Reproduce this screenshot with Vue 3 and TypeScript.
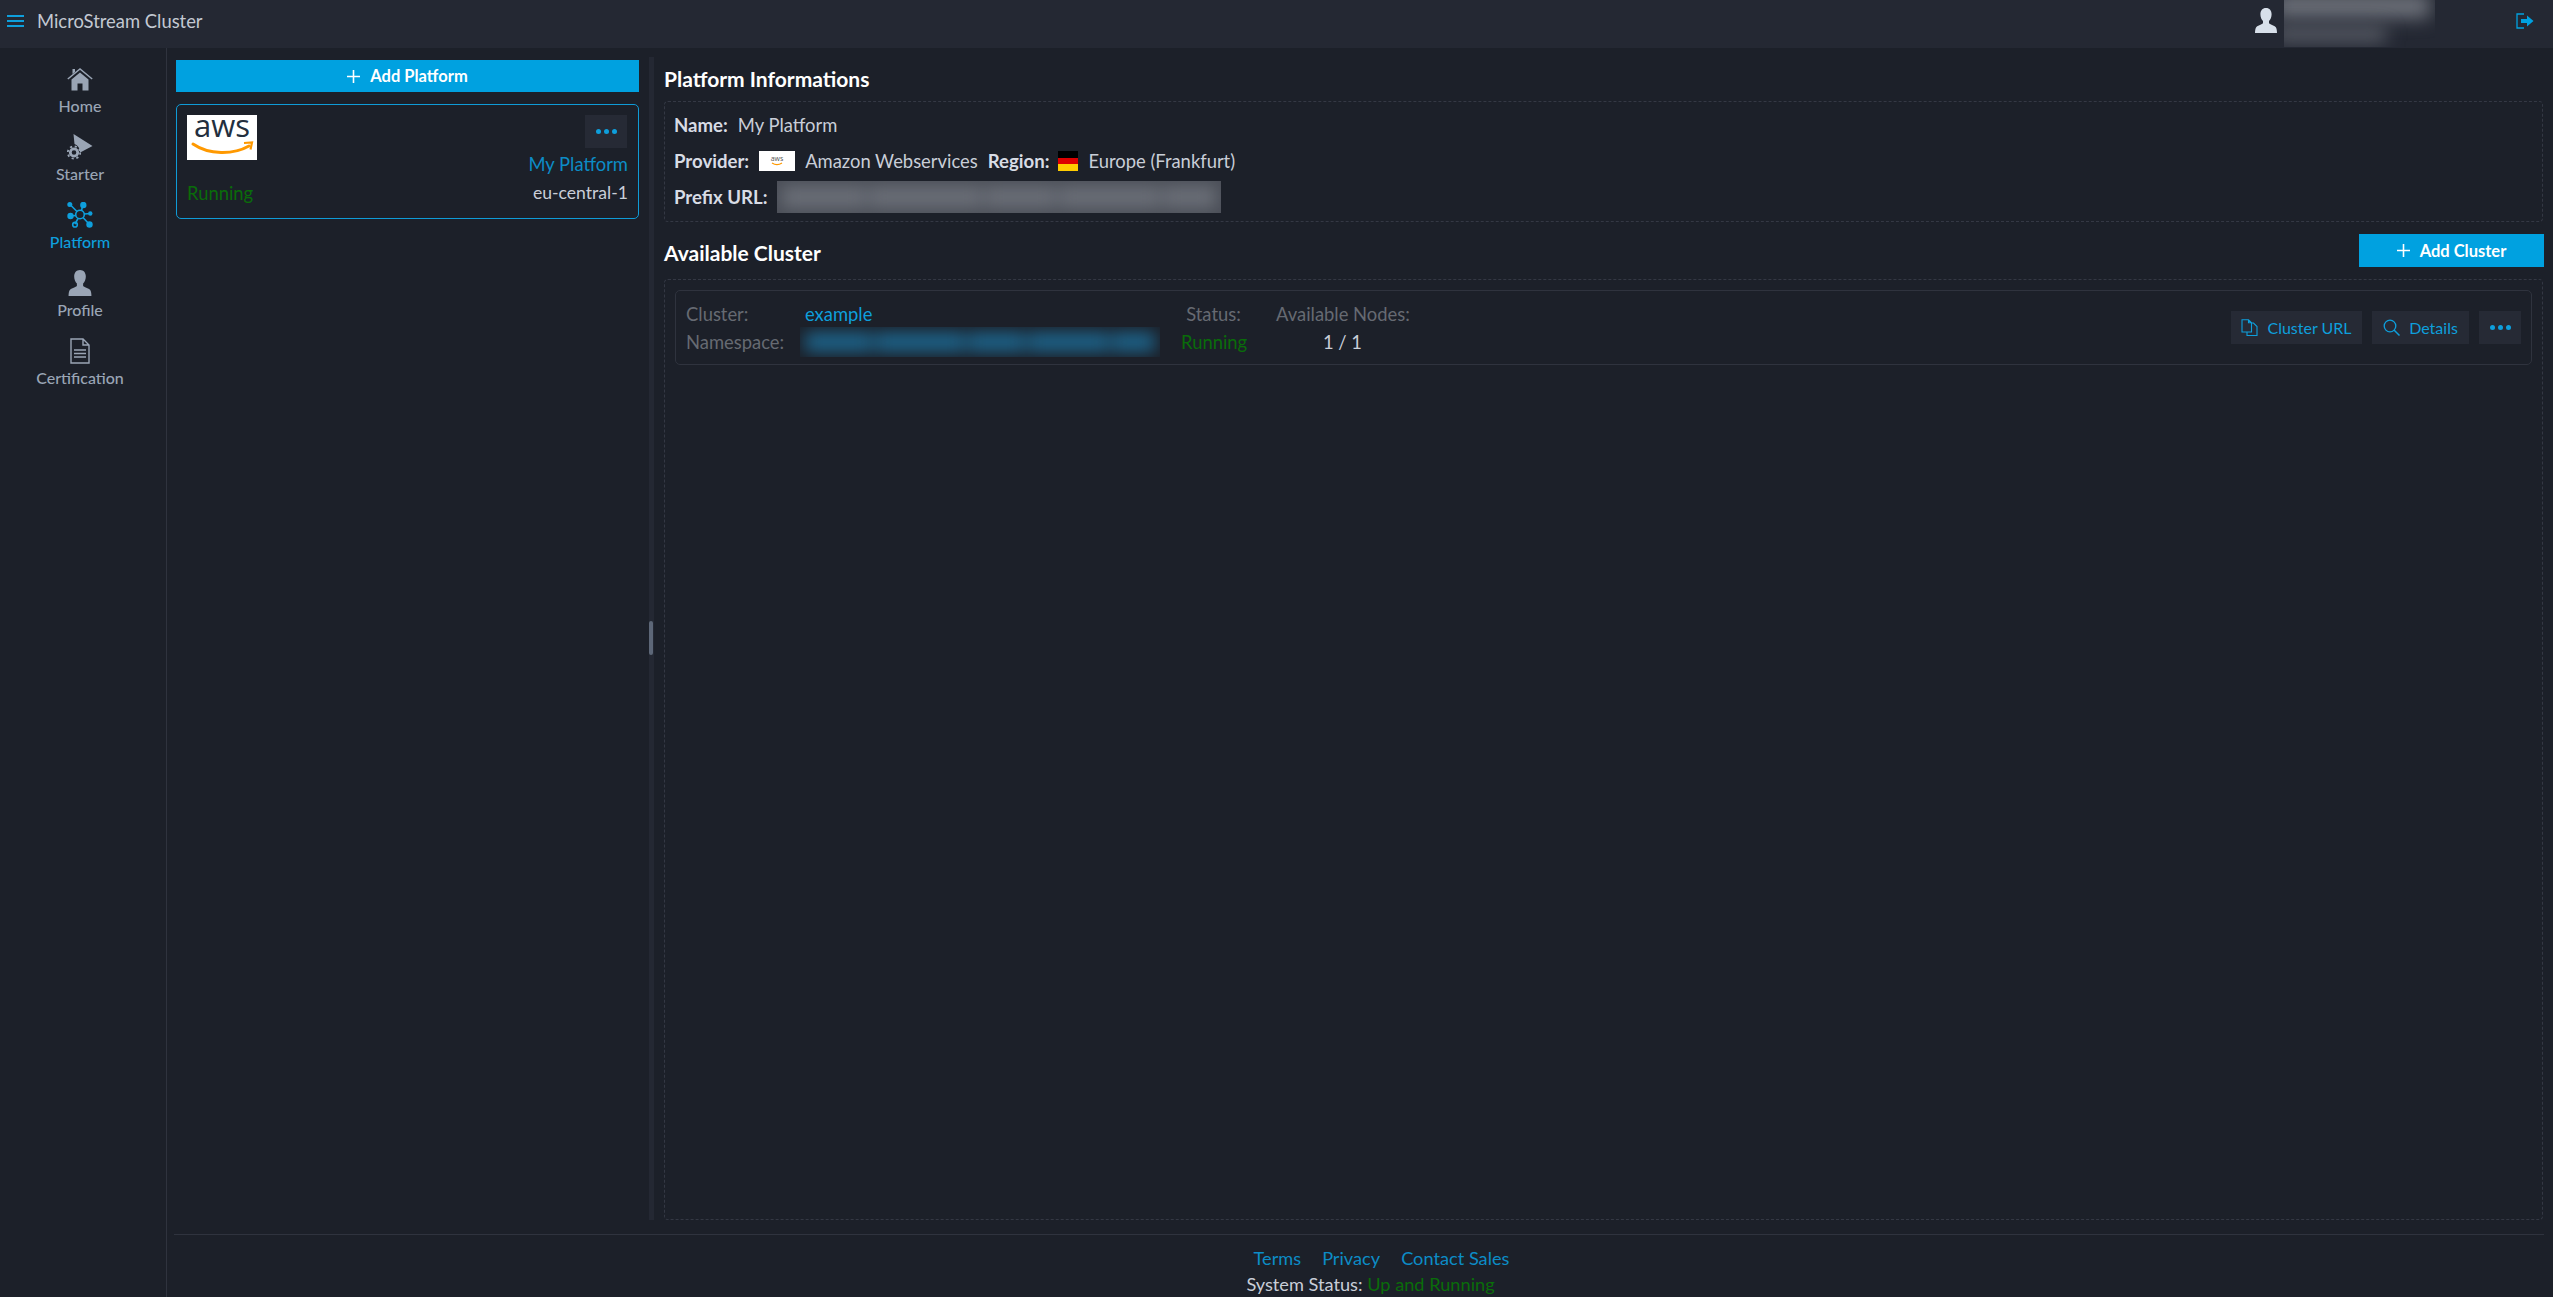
<script setup lang="ts">
const blurBars: number[] = [70, 95, 60, 85, 45];
</script>

<template>
  <div class="app">
    <header class="topbar">
      <button class="burger" aria-label="Menu"><span></span><span></span><span></span></button>
      <span class="brand">MicroStream Cluster</span>
      <svg class="user" viewBox="0 0 22 25" aria-hidden="true">
        <path d="M11 0c3.600 0 5.600 2.700 5.600 6.200 0 2.800-1.100 5.300-2.600 6.700v2.200c0 1 4.600 2.300 6.600 3.800 1 .8 1.400 3.500 1.400 6.100H0c0-2.600.4-5.300 1.400-6.100 2-1.500 6.600-2.800 6.600-3.800v-2.200C6.500 11.500 5.400 9 5.400 6.200 5.400 2.700 7.400 0 11 0z" fill="#d8e0ea"/>
      </svg>
      <div class="user-blur" aria-hidden="true">
        <div class="user-blur-line one"></div>
        <div class="user-blur-line two"></div>
      </div>
      <svg class="logout" viewBox="0 0 18 16" aria-hidden="true">
        <path d="M8 1H1v14h7" fill="none" stroke="#00a1e0" stroke-width="1.300"/>
        <path d="M5 6h6V2.500L17.500 8 11 13.500V10H5z" fill="#00a1e0"/>
      </svg>
    </header>

    <div class="body">
      <nav class="nav">
        <a class="nav-item">
          <svg viewBox="0 0 26 23" class="nav-icon" aria-hidden="true">
            <path d="M.8 11.500 13 1.500l12.200 10" fill="none" stroke="#9aa5b5" stroke-width="1.500"/>
            <path d="M5.500 1.500h2.500v3l-2.500 2z" fill="#9aa5b5"/>
            <path d="M13 5l8.500 7v11H15.500v-7h-5v7H4.500V12z" fill="#9aa5b5"/>
          </svg>
          <span>Home</span>
        </a>
        <a class="nav-item">
          <svg viewBox="0 0 26 26" class="nav-icon" aria-hidden="true">
            <path d="M6.500 0l19 12-12.300 6.500C13 14 11 11.500 7.500 10z" fill="#9aa5b5"/>
            <circle cx="7" cy="18.500" r="3.700" fill="none" stroke="#9aa5b5" stroke-width="2.800"/>
            <circle cx="7" cy="18.500" r="6.200" fill="none" stroke="#9aa5b5" stroke-width="1.800" stroke-dasharray="2.200 2.670"/>
          </svg>
          <span>Starter</span>
        </a>
        <a class="nav-item active">
          <svg viewBox="0 0 26 26" class="nav-icon" aria-hidden="true">
            <g stroke="#0e9fdc" stroke-width="1.600" fill="none">
              <circle cx="13" cy="12.500" r="4.300"/>
              <path d="M3 2.500l7 7M16 2.500l-1.500 6M17 12l7-.5M3.500 14l5.500-.5M8 22l3-5.500M22.500 22.500 16 15.500"/>
              <circle cx="8" cy="22.700" r="2.300"/>
            </g>
            <g fill="#0e9fdc">
              <circle cx="2.800" cy="2.500" r="2.500"/>
              <circle cx="16.300" cy="3" r="3.200"/>
              <circle cx="23.300" cy="11.500" r="2.200"/>
              <circle cx="3.500" cy="14" r="3.200"/>
              <circle cx="22.500" cy="22.500" r="3.200"/>
            </g>
          </svg>
          <span>Platform</span>
        </a>
        <a class="nav-item">
          <svg viewBox="0 0 22 25" class="nav-icon" aria-hidden="true">
            <path d="M11 0c3.600 0 5.600 2.700 5.600 6.200 0 2.800-1.100 5.300-2.600 6.700v2.200c0 1 4.600 2.300 6.600 3.800 1 .8 1.400 3.500 1.400 6.100H0c0-2.600.4-5.300 1.400-6.100 2-1.500 6.600-2.800 6.600-3.800v-2.200C6.500 11.500 5.400 9 5.400 6.200 5.400 2.700 7.400 0 11 0z" fill="#9aa5b5"/>
          </svg>
          <span>Profile</span>
        </a>
        <a class="nav-item">
          <svg viewBox="0 0 20 26" class="nav-icon" aria-hidden="true">
            <path d="M1 1h12l6 6v18H1zM13 1v6h6" fill="none" stroke="#9aa5b5" stroke-width="1.400"/>
            <path d="M4 12h12M4 15.500h12M4 19h12" stroke="#9aa5b5" stroke-width="1.400"/>
          </svg>
          <span>Certification</span>
        </a>
      </nav>

      <main class="main">
        <div class="panes">
          <section class="left">
            <button class="primary">
              <svg class="plus" viewBox="0 0 14 14" aria-hidden="true"><path d="M7 0v14M0 7h14" stroke="#fff" stroke-width="1.700"/></svg>
              <span>Add Platform</span>
            </button>
            <article class="platform-card">
              <div class="card-top">
                <div class="aws-logo">
                  <svg viewBox="0 0 70 45" aria-label="aws">
                    <text x="35" y="22" text-anchor="middle" class="aws-text">aws</text>
                    <path d="M6 29c16 11 40 11 56 2" fill="none" stroke="#f90" stroke-width="3" stroke-linecap="round"/>
                    <path d="M57 28l8-.5-1.500 7" fill="none" stroke="#f90" stroke-width="2.200"/>
                  </svg>
                </div>
                <div class="card-actions">
                  <button class="dark-btn dots" aria-label="More"><i></i><i></i><i></i></button>
                  <span class="link platform-name">My Platform</span>
                </div>
              </div>
              <div class="card-bottom">
                <span class="green">Running</span>
                <span class="region">eu-central-1</span>
              </div>
            </article>
          </section>

          <div class="splitter"><div class="handle"></div></div>

          <section class="right">
            <h2 class="heading first">Platform Informations</h2>
            <div class="info-box">
              <div class="info-row"><b>Name:</b><span class="name-val">My Platform</span></div>
              <div class="info-row">
                <b>Provider:</b>
                <span class="mini-logo"><svg viewBox="0 0 36 20" aria-hidden="true"><text x="18" y="10" text-anchor="middle" class="mini-text">aws</text><path d="M13 12c3 2 7 2 10 0" stroke="#f90" fill="none" stroke-width="1.200"/></svg></span>
                <span class="provider-val">Amazon Webservices</span>
                <b class="region-label">Region:</b>
                <span class="flag"><i class="black"></i><i class="red"></i><i class="gold"></i></span>
                <span>Europe (Frankfurt)</span>
              </div>
              <div class="info-row">
                <b>Prefix URL:</b>
                <div class="blur-mask url-blur" aria-hidden="true">
                  <div class="blur-bars grey"><i v-for="(w, i) in blurBars" :key="i" :style="{ flexGrow: w }"></i></div>
                </div>
              </div>
            </div>

            <div class="cluster-head">
              <h2 class="heading second">Available Cluster</h2>
              <button class="primary add-cluster">
                <svg class="plus" viewBox="0 0 14 14" aria-hidden="true"><path d="M7 0v14M0 7h14" stroke="#fff" stroke-width="1.700"/></svg>
                <span>Add Cluster</span>
              </button>
            </div>

            <div class="cluster-box">
              <article class="cluster-card">
                <div class="cluster-grid">
                  <span class="muted">Cluster:</span>
                  <span class="example">example</span>
                  <span class="muted center">Status:</span>
                  <span></span>
                  <span class="muted center">Available Nodes:</span>
                  <span class="muted">Namespace:</span>
                  <div class="blur-mask ns-blur" aria-hidden="true">
                    <div class="blur-bars blue"><i v-for="(w, i) in blurBars" :key="i" :style="{ flexGrow: w }"></i></div>
                  </div>
                  <span class="green center">Running</span>
                  <span></span>
                  <span class="nodes center">1 / 1</span>
                </div>
                <div class="cluster-actions">
                  <button class="dark-btn url-btn">
                    <svg viewBox="0 0 17 17" class="btn-icon" aria-hidden="true">
                      <path d="M1 .8h6.500l3 3V13H1zM7.500.8v3h3" fill="none" stroke="#0e9fdc" stroke-width="1.100"/>
                      <path d="M10.500 4h2l3.500 3.500v9H6V13" fill="none" stroke="#0e9fdc" stroke-width="1.100"/>
                    </svg>
                    <span>Cluster URL</span>
                  </button>
                  <button class="dark-btn details-btn">
                    <svg viewBox="0 0 17 17" class="btn-icon" aria-hidden="true">
                      <circle cx="7" cy="7" r="5.800" fill="none" stroke="#0e9fdc" stroke-width="1.300"/>
                      <path d="M11 11l5.500 5.500" stroke="#0e9fdc" stroke-width="1.500"/>
                    </svg>
                    <span>Details</span>
                  </button>
                  <button class="dark-btn dots" aria-label="More"><i></i><i></i><i></i></button>
                </div>
              </article>
            </div>
          </section>
        </div>

        <footer class="footer">
          <div class="footer-links">
            <a>Terms</a><a>Privacy</a><a>Contact Sales</a>
          </div>
          <div class="status">System Status: <span class="green">Up and Running</span></div>
        </footer>
      </main>
    </div>
  </div>
</template>

<style>
html, body { margin: 0; background: #1c2029; }
</style>

<style scoped>
* { box-sizing: border-box; }
.app {
  height: 1297px;
  display: flex;
  flex-direction: column;
  background: #1c2029;
  color: #c9ced8;
  font-family: Lato, "Open Sans", sans-serif;
  font-size: 18.4px;
  overflow: hidden;
}
button { font-family: inherit; border: 0; padding: 0; cursor: pointer; }

.topbar {
  height: 48px;
  flex: none;
  display: flex;
  align-items: center;
  padding-bottom: 7px;
  background: #242833;
}
.burger {
  width: 17px;
  margin-left: 7px;
  display: flex;
  flex-direction: column;
  gap: 3px;
  background: none;
}
.burger span { display: block; height: 2px; background: #0e9fdc; }
.brand { margin-left: 13px; font-size: 18.4px; color: #c3c8d2; }
.user { width: 22px; height: 25px; margin-left: auto; }
.user-blur {
  width: 151px;
  height: 47px;
  margin-left: 7px;
  align-self: flex-start;
  overflow: hidden;
  position: relative;
}
.user-blur-line { position: absolute; left: -10px; background: #6e727b; filter: blur(9px); }
.user-blur-line.one { top: -6px; width: 156px; height: 24px; }
.user-blur-line.two { top: 27px; width: 112px; height: 15px; background: #5b5f69; }
.logout { width: 18px; height: 16px; margin-left: 81px; margin-right: 19px; }

.body { flex: 1; min-height: 0; display: flex; }
.nav {
  width: 167px;
  flex: none;
  border-right: 1px solid #2f333e;
  padding: 18px 6px 0 0;
  display: flex;
  flex-direction: column;
}
.nav-item {
  height: 68px;
  display: flex;
  flex-direction: column;
  align-items: center;
  color: #9aa5b5;
  font-size: 16px;
  font-weight: 500;
  line-height: 20px;
}
.nav-icon { height: 26px; width: 26px; margin-bottom: 4px; flex: none; }
.nav-item.active { color: #0e9fdc; }

.main { flex: 1; min-width: 0; display: flex; flex-direction: column; }
.panes { flex: 1; min-height: 0; display: flex; padding-top: 9px; }

.left { width: 482px; flex: none; padding: 3px 10px 0 9px; }
.primary {
  width: 100%;
  height: 32px;
  background: #00a1e0;
  color: #fff;
  font-size: 16.5px;
  font-weight: 700;
  display: flex;
  align-items: center;
  justify-content: center;
  gap: 10px;
}
.plus { width: 13px; height: 13px; }

.platform-card {
  margin-top: 12px;
  height: 115px;
  border: 1px solid #0f9bd7;
  border-radius: 5px;
  padding: 10px 10px 0 10px;
}
.card-top { display: flex; justify-content: space-between; height: 64px; }
.aws-logo { width: 70px; height: 45px; background: #fff; }
.aws-logo svg { display: block; width: 100%; height: 100%; overflow: visible; }
.aws-text { font-family: "Open Sans", sans-serif; font-size: 31px; fill: #232f3e; }
.mini-text { font-family: "Open Sans", sans-serif; font-size: 7px; fill: #555; }
.mini-logo svg { overflow: visible; }
.card-actions { display: flex; flex-direction: column; align-items: flex-end; }
.dark-btn {
  height: 33px;
  background: #262a35;
  color: #0e9fdc;
  font-size: 16px;
  display: flex;
  align-items: center;
  justify-content: center;
}
.dots { width: 42px; gap: 3px; }
.dots i { width: 5px; height: 5px; border-radius: 50%; background: #0e9fdc; }
.card-actions .dots { margin-right: 1px; }
.link, .footer-links a { color: #0c8cc6; }
.platform-name { margin-top: 4px; font-size: 18.4px; line-height: 24px; }
.card-bottom {
  display: flex;
  justify-content: space-between;
  margin-top: 2px;
  line-height: 24px;
}
.region { font-size: 17.6px; }
.green { color: #0a6c0a; }

.splitter {
  width: 5px;
  flex: none;
  background: #242833;
  position: relative;
  height: 1163px;
}
.handle {
  position: absolute;
  left: 0;
  top: 564px;
  width: 4px;
  height: 34px;
  border-radius: 2px;
  background: #5d6778;
}

.right { flex: 1; min-width: 0; padding: 0 10px; display: flex; flex-direction: column; }
.heading { margin: 0; color: #fff; font-size: 21px; font-weight: 700; line-height: 24px; }
.heading.first { height: 44px; padding-top: 10px; }
.heading.second { margin-top: 5px; }

.info-box {
  height: 121px;
  border: 1px dashed #343844;
  border-radius: 4px;
  padding: 5px 9px 0;
  flex: none;
}
.info-row {
  height: 36px;
  display: flex;
  align-items: center;
  color: #c9ced8;
}
.info-row b { color: #d8dce5; font-weight: 700; font-size: 18.6px; }
.name-val { margin-left: 10px; }
.mini-logo { width: 36px; height: 20px; background: #fff; margin-left: 10px; }
.mini-logo svg { display: block; }
.provider-val { margin-left: 10px; }
.info-row .region-label { margin-left: 10px; }
.flag { width: 20px; height: 20px; margin-left: 9px; display: flex; flex-direction: column; margin-right: 10px; }
.flag i { flex: 1; }
.flag .black { background: #000; }
.flag .red { background: #d00; }
.flag .gold { background: #fc0; }

.blur-mask { overflow: hidden; }
.url-blur { width: 444px; height: 32px; margin-left: 10px; background: #4a4e57; }
.ns-blur { width: 360px; height: 30px; }
.blur-bars { display: flex; gap: 3px; height: 100%; padding: 5px; filter: blur(8px); }
.blur-bars i { flex-basis: 0; }
.blur-bars.grey i { background: #6a6e77; }
.blur-bars.blue i { background: #1d6288; }

.cluster-head {
  height: 57px;
  flex: none;
  display: flex;
  align-items: center;
  justify-content: space-between;
}
.add-cluster { width: 185px; height: 33px; margin-right: -1px; }
.cluster-box {
  height: 941px;
  flex: none;
  border: 1px dashed #343844;
  border-radius: 4px;
  padding: 10px;
}
.cluster-card {
  height: 75px;
  border: 1px solid #2f333e;
  border-radius: 5px;
  padding: 0 10px 0 10px;
  display: flex;
  align-items: center;
  justify-content: space-between;
}
.cluster-grid {
  display: grid;
  grid-template-columns: 114px 381px 65px 30px 133px;
  grid-auto-rows: 28px;
  align-items: center;
  white-space: nowrap;
}
.muted { color: #666a72; }
.center { text-align: center; }
.example { color: #0e9fdc; margin-left: 5px; }
.nodes { color: #c9ced8; }
.cluster-actions { display: flex; gap: 10px; }
.url-btn { width: 131px; gap: 9px; }
.details-btn { width: 97px; gap: 9px; }
.btn-icon { width: 17px; height: 17px; }

.footer {
  height: 63px;
  flex: none;
  margin: 0 9px 0 7px;
  border-top: 1px solid #2f333e;
  padding-top: 10px;
  text-align: center;
  font-size: 18.2px;
  line-height: 26px;
}
.footer-links { display: flex; justify-content: center; gap: 21px; padding-left: 45px; }
.status { color: #c9ced8; padding-left: 23px; }
</style>
